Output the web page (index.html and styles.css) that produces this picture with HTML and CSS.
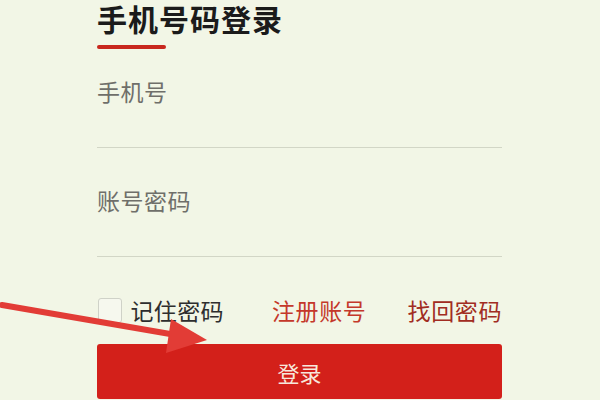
FILE: index.html
```html
<!DOCTYPE html>
<html lang="zh-CN">
<head>
<meta charset="utf-8">
<title>手机号码登录</title>
<link rel="stylesheet" href="styles.css">
</head>
<body>
<div class="page">
  <h1 class="title">手机号码登录</h1>
  <div class="title-bar"></div>
  <div class="field field-first">
    <div class="label">手机号</div>
    <div class="input"></div>
  </div>
  <div class="field">
    <div class="label">账号密码</div>
    <div class="input"></div>
  </div>
  <div class="options">
    <div class="remember">
      <span class="checkbox"></span>
      <span class="remember-text">记住密码</span>
    </div>
    <a class="link link-register">注册账号</a>
    <a class="link link-forgot">找回密码</a>
  </div>
  <button class="login-btn">登录</button>
</div>
<svg class="arrow" width="600" height="400" viewBox="0 0 600 400">
  <line x1="2" y1="305" x2="176" y2="335" stroke="#e23c36" stroke-width="6" stroke-linecap="round"/>
  <polygon points="171,319 207,340 166,353" fill="#e23c36"/>
</svg>
</body>
</html>
```
FILE: styles.css
```css
html, body {
  margin: 0;
  padding: 0;
  background: #f2f6e6;
  width: 600px;
  height: 400px;
  overflow: hidden;
  font-family: "Noto Sans CJK SC", "Noto Sans", sans-serif;
}
.page {
  width: 405px;
  padding: 0 0 0 97px;
  display: flex;
  flex-direction: column;
}
.title {
  margin: 0;
  font-size: 30px;
  line-height: 36px;
  font-weight: 700;
  letter-spacing: 1px;
  color: #1b1b1b;
}
.title-bar {
  margin-top: 9px;
  width: 69px;
  height: 4px;
  background: #c8281e;
  border-radius: 2px;
}
.field {
  margin-top: 40px;
  display: flex;
  flex-direction: column;
}
.field-first {
  margin-top: 30px;
}
.label {
  font-size: 23px;
  line-height: 24px;
  letter-spacing: 0.5px;
  color: #6f6f6a;
}
.input {
  height: 44px;
  border-bottom: 1px solid #d2d6c6;
}
.options {
  margin-top: 40px;
  height: 26px;
  display: flex;
  align-items: center;
}
.remember {
  width: 127px;
  display: flex;
  align-items: center;
}
.checkbox {
  width: 23px;
  height: 23px;
  margin-left: 1px;
  border: 1px solid #cfd2c8;
  border-radius: 3px;
  background: #f6f8ee;
}
.remember-text {
  margin-left: 8px;
  font-size: 23px;
  line-height: 26px;
  letter-spacing: 0.4px;
  color: #2e2e2e;
  white-space: nowrap;
}
.link {
  font-size: 23px;
  line-height: 26px;
  letter-spacing: 0.6px;
  white-space: nowrap;
}
.link-register {
  margin-left: 48px;
  width: 95px;
  color: #c4382a;
}
.link-forgot {
  margin-left: 41px;
  color: #a12c22;
}
.login-btn {
  margin-top: 21px;
  height: 55px;
  width: 405px;
  border: none;
  border-radius: 3px;
  background: #d3201a;
  color: #f7e8dc;
  font-family: "Noto Sans CJK SC", "Noto Sans", sans-serif;
  font-size: 22px;
  padding: 0;
}
.arrow {
  position: absolute;
  left: 0;
  top: 0;
  pointer-events: none;
}
```
